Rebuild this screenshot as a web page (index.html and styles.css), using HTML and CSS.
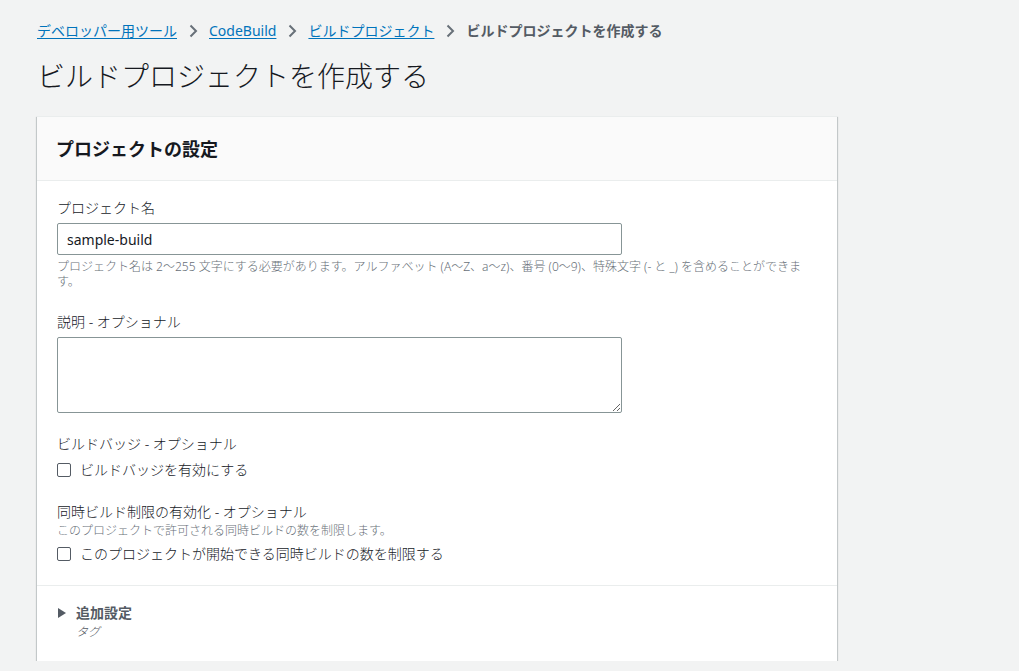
FILE: index.html
```html
<!DOCTYPE html>
<html lang="ja">
<head>
<meta charset="utf-8">
<link rel="stylesheet" href="styles.css">
</head>
<body>
<main class="page">
  <nav class="crumbs">
    <a href="#">デベロッパー用ツール</a>
    <span class="sep"><svg width="10" height="14" viewBox="0 0 10 14"><path d="M2.5 1.5 L8 7 L2.5 12.5" fill="none" stroke="#687078" stroke-width="2"/></svg></span>
    <a href="#">CodeBuild</a>
    <span class="sep"><svg width="10" height="14" viewBox="0 0 10 14"><path d="M2.5 1.5 L8 7 L2.5 12.5" fill="none" stroke="#687078" stroke-width="2"/></svg></span>
    <a href="#">ビルドプロジェクト</a>
    <span class="sep"><svg width="10" height="14" viewBox="0 0 10 14"><path d="M2.5 1.5 L8 7 L2.5 12.5" fill="none" stroke="#687078" stroke-width="2"/></svg></span>
    <span class="current">ビルドプロジェクトを作成する</span>
  </nav>
  <h1 class="title">ビルドプロジェクトを作成する</h1>

  <section class="card">
    <header class="card-head">
      <h2>プロジェクトの設定</h2>
    </header>
    <div class="card-body">
      <div class="field first">
        <label class="label">プロジェクト名</label>
        <input class="input" type="text" value="sample-build">
        <p class="hint">プロジェクト名は 2〜255 文字にする必要があります。アルファベット (A〜Z、a〜z)、番号 (0〜9)、特殊文字 (- と _) を含めることができます。</p>
      </div>
      <div class="field">
        <label class="label">説明 - オプショナル</label>
        <textarea class="textarea"></textarea>
      </div>
      <div class="field">
        <label class="label">ビルドバッジ - オプショナル</label>
        <label class="check"><span class="box"></span>ビルドバッジを有効にする</label>
      </div>
      <div class="field last">
        <label class="label">同時ビルド制限の有効化 - オプショナル</label>
        <p class="desc">このプロジェクトで許可される同時ビルドの数を制限します。</p>
        <label class="check"><span class="box"></span>このプロジェクトが開始できる同時ビルドの数を制限する</label>
      </div>
    </div>
    <div class="card-foot">
      <div class="expander">
        <svg class="caret" width="8" height="10" viewBox="0 0 8 10"><path d="M0 0 L8 5 L0 10 Z" fill="#545b64"/></svg>
        <span>追加設定</span>
      </div>
      <div class="sub">タグ</div>
    </div>
  </section>
</main>
</body>
</html>
```

FILE: styles.css
```css
* { box-sizing: border-box; }
html, body {
  margin: 0;
  padding: 0;
  background: #f2f3f3;
}
body {
  font-family: "Noto Sans", "Noto Sans CJK JP", sans-serif;
  color: #16191f;
  font-size: 14px;
  font-weight: 300;
}
.page {
  padding: 20px 0 0 37px;
  width: 837px;
}
.crumbs {
  display: flex;
  align-items: center;
  height: 22px;
  line-height: 22px;
  font-size: 14px;
  font-weight: 400;
}
.crumbs a {
  color: #0073bb;
  text-decoration: underline;
  text-underline-offset: 2px;
}
.crumbs .sep {
  display: flex;
  align-items: center;
  margin: 0 11px 0 11px;
}
.crumbs .current {
  color: #545b64;
  font-weight: 700;
}
.title {
  margin: 16px 0 0 0;
  font-size: 28px;
  line-height: 36px;
  font-weight: 300;
  color: #16191f;
}
.card {
  margin-top: 22px;
  background: #fff;
  box-shadow: 0 1px 1px 0 rgba(0,28,36,.3), 1px 1px 1px 0 rgba(0,28,36,.15), -1px 1px 1px 0 rgba(0,28,36,.15);
  border-top: 1px solid #eaeded;
}
.card-head {
  background: #fafafa;
  border-bottom: 1px solid #eaeded;
  height: 64px;
  padding: 0 19px;
  display: flex;
  align-items: center;
}
.card-head h2 {
  margin: 0;
  font-size: 18px;
  font-weight: 700;
  line-height: 24px;
  color: #16191f;
}
.card-body {
  padding: 16px 20px 0 20px;
}
.field {
  margin-bottom: 20px;
}
.field.first { margin-bottom: 22px; }
.field.last { margin-bottom: 0; }
.label {
  display: block;
  font-size: 14px;
  line-height: 22px;
  color: #16191f;
  margin-bottom: 4px;
}
.input {
  display: block;
  width: 565px;
  height: 32px;
  border: 1px solid #879596;
  border-radius: 2px;
  padding: 0 9px;
  font-family: "Noto Sans", "Noto Sans CJK JP", sans-serif;
  font-size: 14px;
  font-weight: 400;
  color: #16191f;
  background: #fff;
}
.hint {
  margin: 4px 0 0 0;
  font-size: 12px;
  line-height: 15px;
  color: #687078;
}
.textarea {
  display: block;
  width: 565px;
  height: 76px;
  border: 1px solid #879596;
  border-radius: 2px;
  resize: vertical;
  font-family: inherit;
  background: #fff;
}
.desc {
  margin: -4px 0 4px 0;
  font-size: 12px;
  line-height: 16px;
  color: #687078;
}
.check {
  display: flex;
  align-items: center;
  font-size: 14px;
  line-height: 22px;
  color: #16191f;
}
.box {
  width: 14px;
  height: 14px;
  border: 1px solid #545b64;
  border-radius: 2px;
  background: #fff;
  margin: 0 9px 0 0;
  flex: none;
}
.card-foot {
  margin-top: 20px;
  border-top: 1px solid #eaeded;
  padding: 16px 20px 21px 21px;
}
.expander {
  display: flex;
  align-items: center;
  font-size: 14px;
  font-weight: 700;
  line-height: 22px;
  color: #545b64;
}
.caret { margin-right: 10px; }
.sub {
  padding-left: 18px;
  font-size: 12px;
  line-height: 16px;
  font-style: italic;
  color: #545b64;
}
```
